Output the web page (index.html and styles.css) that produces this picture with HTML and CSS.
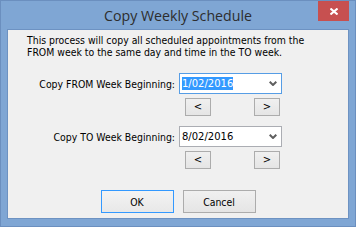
FILE: index.html
```html
<!DOCTYPE html>
<html>
<head>
<meta charset="utf-8">
<link rel="stylesheet" href="styles.css">
</head>
<body>
<div class="window">
  <div class="titlebar">
    <span class="title">Copy Weekly Schedule</span>
    <div class="close">
      <svg width="8" height="7" viewBox="0 0 8 7"><path d="M0.5 0.5 L7.5 6.5 M7.5 0.5 L0.5 6.5" stroke="#ffffff" stroke-width="2" fill="none"/></svg>
    </div>
  </div>
  <div class="client">
    <p class="intro">This process will copy all scheduled appointments from the<br>FROM week to the same day and time in the TO week.</p>
    <div class="form">
      <div class="label">Copy FROM Week Beginning:</div>
      <div class="combo focus"><span class="value sel">1/02/2016</span><svg class="arrow" width="8" height="5" viewBox="0 0 8 5"><polyline points="0.7,0.7 4,4 7.3,0.7" stroke="#5f5f5f" stroke-width="2" fill="none"/></svg></div>
      <div class="nav"><button class="small">&lt;</button><button class="small">&gt;</button></div>
      <div class="label second">Copy TO Week Beginning:</div>
      <div class="combo second"><span class="value">8/02/2016</span><svg class="arrow" width="8" height="5" viewBox="0 0 8 5"><polyline points="0.7,0.7 4,4 7.3,0.7" stroke="#5f5f5f" stroke-width="2" fill="none"/></svg></div>
      <div class="nav"><button class="small">&lt;</button><button class="small">&gt;</button></div>
    </div>
    <div class="actions">
      <button class="btn default">OK</button>
      <button class="btn">Cancel</button>
    </div>
  </div>
</div>
</body>
</html>
```
FILE: styles.css
```css
html, body {
  margin: 0;
  padding: 0;
}
body {
  width: 356px;
  height: 227px;
  overflow: hidden;
  font-family: "DejaVu Sans Condensed", "DejaVu Sans", "Liberation Sans", sans-serif;
  font-size: 10.4px;
  color: #000;
}
.window {
  box-sizing: border-box;
  width: 356px;
  height: 227px;
  background: #7fa6d4;
  border: 1px solid #6b8fbf;
  display: flex;
  flex-direction: column;
}
.titlebar {
  position: relative;
  height: 28px;
  display: flex;
  align-items: center;
  justify-content: center;
}
.title {
  font-family: "Open Sans", "Noto Sans", sans-serif;
  font-size: 14.2px;
  color: #2d2d2d;
  margin-top: 1px;
}
.close {
  position: absolute;
  top: 0;
  right: 6px;
  width: 31px;
  height: 20px;
  background: #c75050;
  display: flex;
  align-items: center;
  justify-content: center;
}
.close svg {
  display: block;
}
.client {
  flex: 1;
  margin: 0 6px 7px 6px;
  border: 1px solid #6d92c2;
  background: #f0f0f0;
  display: flex;
  flex-direction: column;
}
.intro {
  margin: 4px 0 0 19px;
  line-height: 12px;
  white-space: nowrap;
}
.form {
  display: grid;
  grid-template-columns: 167px 103px;
  column-gap: 4px;
  margin-top: 15px;
}
.label {
  justify-self: end;
  align-self: center;
  white-space: nowrap;
}
.label.second, .combo.second {
  margin-top: 10px;
}
.combo {
  box-sizing: border-box;
  height: 21px;
  border: 1px solid #abadb3;
  background: #ffffff;
  display: flex;
  align-items: center;
  padding-left: 2px;
}
.combo.focus {
  border-color: #569de5;
}
.value {
  display: inline-block;
  line-height: 13px;
  font-family: "DejaVu Sans", sans-serif;
  font-size: 10px;
}
.sel {
  background: #3399ff;
  color: #ffffff;
}
.arrow {
  display: block;
  margin-left: auto;
  margin-right: 4px;
}
.nav {
  grid-column: 2;
  display: flex;
  justify-content: space-between;
  padding: 0 2px 0 6px;
  margin-top: 4px;
}
.small {
  box-sizing: border-box;
  width: 26px;
  height: 18px;
  padding: 0;
  border: 1px solid #acacac;
  background: linear-gradient(#f0f0f0, #e5e5e5);
  font-family: "DejaVu Sans", sans-serif;
  font-size: 10px;
  color: #000;
  line-height: 14px;
}
.actions {
  display: flex;
  justify-content: center;
  gap: 9px;
  margin-top: 21px;
}
.btn {
  box-sizing: border-box;
  width: 73px;
  height: 23px;
  padding: 0;
  border: 1px solid #acacac;
  background: linear-gradient(#f0f0f0, #e5e5e5);
  font-family: "DejaVu Sans Condensed", "DejaVu Sans", sans-serif;
  font-size: 10.4px;
  color: #000;
}
.btn.default {
  border-color: #3399ff;
  background: linear-gradient(#f3f3f3, #e8e8e8);
}
```
